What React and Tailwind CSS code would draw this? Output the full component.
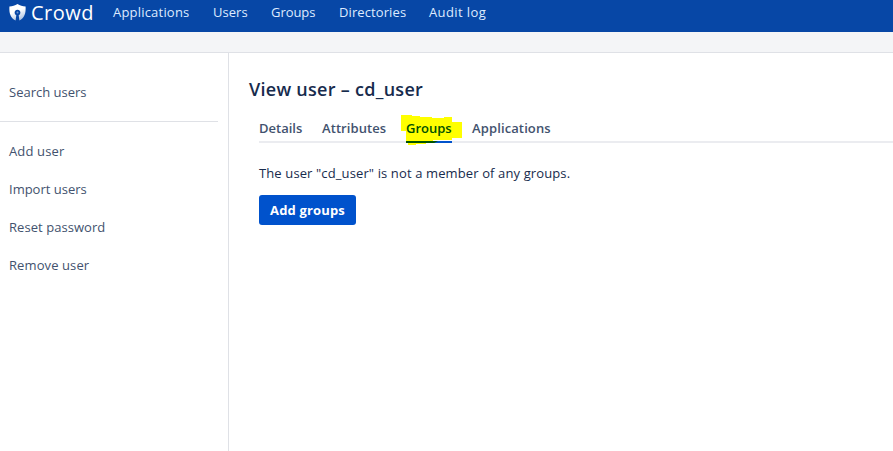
const navItems = [
  { label: 'Applications', style: 'w-[100px] tracking-[0.2px]' },
  { label: 'Users', style: 'w-[58px] tracking-[0.05px]' },
  { label: 'Groups', style: 'w-[68px] tracking-[-0.05px]' },
  { label: 'Directories', style: 'w-[90px] tracking-[0.1px]' },
  { label: 'Audit log', style: 'w-[70px] tracking-[0.4px]' },
];

const actions = [
  { label: 'Add user', style: 'tracking-[0.15px]' },
  { label: 'Import users', style: '' },
  { label: 'Reset password', style: 'tracking-[0.05px]' },
  { label: 'Remove user', style: 'tracking-[0.1px]' },
];

function CrowdMark() {
  return (
    <svg className="h-[17px] w-[17px] shrink-0" viewBox="0 0 17 17">
      <defs>
        <linearGradient id="shield" x1="0.65" y1="0.35" x2="0.9" y2="1">
          <stop offset="0" stopColor="#fff" />
          <stop offset="1" stopColor="#fff" stopOpacity="0.6" />
        </linearGradient>
      </defs>
      <path
        fill="url(#shield)"
        d="M8.5 0C6.1 1.6 3.4 2.2 0.4 2.4C0 9 1.4 14 6.6 16.6L7.3 11.2A2.9 2.9 0 1 1 9.7 11.2L10.4 16.6C15.6 14 17 9 16.6 2.4C13.6 2.2 10.9 1.6 8.5 0Z"
      />
      <circle cx="8.5" cy="8.6" r="1" fill="#6f93cc" />
    </svg>
  );
}

function Tab({ children, className }) {
  return <div className={`h-[25px] shrink-0 leading-[24px] ${className}`}>{children}</div>;
}

export default function App() {
  return (
    <div className="flex h-[451px] w-[893px] flex-col overflow-hidden bg-white font-['Open_Sans','Noto_Sans',sans-serif] text-[13px] text-[#42526e]">
      <header className="flex h-8 shrink-0 items-start bg-[#0747a6] pl-[9px] text-[#deebff]">
        <div className="flex h-[25px] w-[104px] items-center gap-[5px]">
          <CrowdMark />
          <span className="text-[20px] leading-[25px] tracking-[0.5px] text-white">Crowd</span>
        </div>
        <nav className="flex leading-[25px] whitespace-nowrap">
          {navItems.map((item) => (
            <a key={item.label} className={item.style}>{item.label}</a>
          ))}
        </nav>
      </header>
      <div className="h-[21px] shrink-0 border-b border-[#dfe1e6] bg-[#f4f5f7]" />
      <div className="flex min-h-0 flex-1">
        <aside className="w-[229px] shrink-0 border-r border-[#dfe1e6] pr-[10px]">
          <div className="h-[69px] border-b border-[#dfe1e6] pt-[29px] pl-[9px] leading-5">Search users</div>
          <ul className="flex flex-col gap-[18px] pt-[19px] pl-[9px]">
            {actions.map((action) => (
              <li key={action.label} className={`h-5 leading-5 ${action.style}`}>{action.label}</li>
            ))}
          </ul>
        </aside>
        <main className="flex-1 pt-[23px] pl-5 text-[#172b4d]">
          <h1 className="h-[28px] text-[18px] leading-[26px] font-semibold tracking-[0.28px] whitespace-nowrap">View user – cd_user</h1>
          <div className="ml-[10px] flex h-[39px] items-end border-b-2 border-[#ebecf0] font-semibold whitespace-nowrap text-[#42526e]">
            <Tab className="w-[63px]">Details</Tab>
            <Tab className="w-[84px] tracking-[0.08px]">Attributes</Tab>
            <Tab className="relative z-0 w-[66px] text-[#005000]">
              <svg className="absolute -top-[2px] -left-[5px] -z-10 h-[31px] w-[61px]" viewBox="0 0 61 31">
                <path fill="#ff0" d="M0 1H11V2H19V3H31V4H43V3H51V8H61V24H51V26H32V28H25V30H15V31H7V29H5V17H0Z" />
                <path fill="#0052cc" d="M5 27H51V29H5Z" />
                <path fill="#005200" d="M5 27H37L33 29H5Z" />
              </svg>
              Groups
            </Tab>
            <Tab className="w-[82px] tracking-[0.12px]">Applications</Tab>
          </div>
          <p className="mt-5 ml-[10px] h-5 leading-5 tracking-[0.12px] whitespace-nowrap">The user "cd_user" is not a member of any groups.</p>
          <button className="mt-[12px] ml-[10px] flex h-[30px] w-[97px] items-center justify-center rounded-[3px] bg-[#0052cc] pt-px text-[13px] font-bold tracking-[0.15px] whitespace-nowrap text-white">Add groups</button>
        </main>
      </div>
    </div>
  );
}
